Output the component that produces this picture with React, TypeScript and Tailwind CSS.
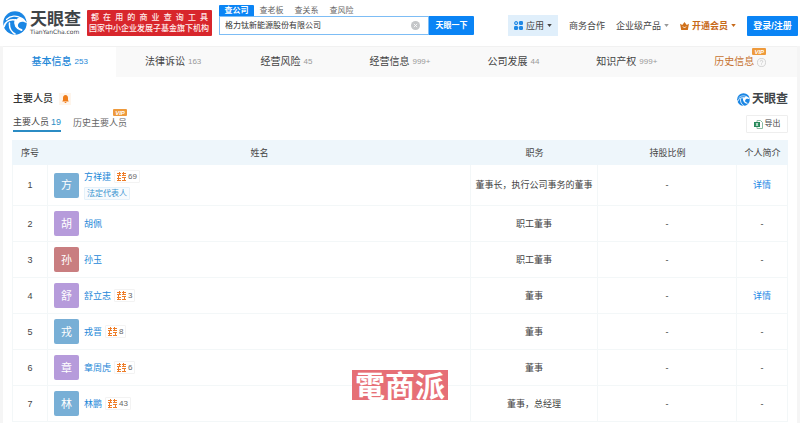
import type { ReactNode } from "react";

type Person = {
  name: string;
  avatar: string;
  color: string;
  companies?: number;
  legal?: boolean;
  job: string;
  detail?: boolean;
};

const people: Person[] = [
  { name: "方祥建", avatar: "方", color: "bg-[#78afd6]", companies: 69, legal: true, job: "董事长，执行公司事务的董事", detail: true },
  { name: "胡佩", avatar: "胡", color: "bg-[#b69bdb]", job: "职工董事" },
  { name: "孙玉", avatar: "孙", color: "bg-[#c97e80]", job: "职工董事" },
  { name: "舒立志", avatar: "舒", color: "bg-[#b69bdb]", companies: 3, job: "董事", detail: true },
  { name: "戎晋", avatar: "戎", color: "bg-[#78afd6]", companies: 8, job: "董事" },
  { name: "章周虎", avatar: "章", color: "bg-[#b69bdb]", companies: 6, job: "董事" },
  { name: "林鹏", avatar: "林", color: "bg-[#78afd6]", companies: 43, job: "董事，总经理" },
];

const sections = [
  { label: "法律诉讼", count: "163" },
  { label: "经营风险", count: "45" },
  { label: "经营信息", count: "999+" },
  { label: "公司发展", count: "44" },
  { label: "知识产权", count: "999+" },
];

function LogoMark({ className }: { className: string }) {
  return (
    <svg viewBox="0 0 48 48" className={className} aria-hidden="true">
      <circle cx="24" cy="24" r="23.5" fill="#1a86e4" />
      <g fill="none" stroke="#fff" strokeLinecap="round">
        <path d="M7 17C15 9 27 8 36 14" strokeWidth="2.5" />
        <path d="M2 31C5 21 14 16 25 18" strokeWidth="3.5" />
        <path d="M13 24c-1 9 3 17 11 22" strokeWidth="3" />
        <path d="M25 18c-3 9 2 17 12 20" strokeWidth="4" />
      </g>
      <path d="M25 19c4-6 11-8 17-3l7 9c-6-4-12-5-16-2-4 3-4 8-1 12-6-3-9-9-7-16z" fill="#fff" />
      <path d="M37 4l11 12v6C46 15 43 9 37 4z" fill="#fff" />
    </svg>
  );
}

function Caret() {
  return (
    <svg viewBox="0 0 6 4" className="h-[3px] w-[5px]" aria-hidden="true">
      <path d="M0 0h6L3 4z" fill="currentColor" />
    </svg>
  );
}

function Vip() {
  return (
    <span className="absolute -top-2 right-0 flex h-[7px] w-[14px] items-center justify-center rounded-[1px] bg-[#ee9a3c] font-['Liberation_Sans',sans-serif] text-[6px] leading-none font-bold text-white italic">
      VIP
    </span>
  );
}

function CompanyBadge({ count }: { count: number }) {
  return (
    <a href="#companies" className="flex h-[13px] items-center gap-[2px] rounded-[1px] border border-[#f3f3f3] bg-white px-[2px] text-[8px] leading-none text-[#666]">
      <svg viewBox="0 0 9 9" className="h-[9px] w-[9px]" fill="none" stroke="#ee7d28" strokeWidth="1" aria-hidden="true">
        <path d="M0 1.500h4M2.500 0v4M0 3.500h4M5 1.500h4M6.500 0v4M5 3.500h4M1.500 4v5M0 6.500h4M0 8.500h4M5 5.500h4M7.500 5v4M5 8.500h4" />
      </svg>
      {count}
    </a>
  );
}

function Th({ children }: { children: ReactNode }) {
  return <th scope="col" className="h-[25px] bg-[#eef6fb] p-0 text-center font-normal text-[#444]">{children}</th>;
}

const cell = "border-r border-b border-[#f3f7f8] p-0 text-center";

export default function App() {
  return (
    <div className="flex min-h-screen flex-col bg-white font-['Liberation_Sans','Noto_Sans_CJK_SC',sans-serif] text-[9px] leading-3 text-[#444]">
      <header className="flex h-[46px] shrink-0 items-center pr-[2px] pl-[3px]">
        <a href="#home" className="flex items-center gap-[3px]" aria-label="天眼查">
          <LogoMark className="h-6 w-6" />
          <span className="flex w-[54px] flex-col text-[#3f4448]">
            <span className="text-[17px] leading-[17px] font-bold">天眼查</span>
            <span className="font-['DejaVu_Sans',sans-serif] text-[6px] leading-[7px]">TianYanCha.com</span>
          </span>
        </a>
        <div className="ml-[3px] flex h-[26px] w-[125px] shrink-0 flex-col justify-center rounded-[1px] bg-[#d8262c] px-[2px] text-[8px] leading-[11px] font-medium text-[#ffeceb]">
          <div className="flex justify-between px-[2px]">
            {Array.from("都在用的商业查询工具").map((c) => (
              <span key={c}>{c}</span>
            ))}
          </div>
          <div className="whitespace-nowrap">国家中小企业发展子基金旗下机构</div>
        </div>

        <form className="mb-[6px] ml-[7px] flex w-[255px] shrink-0 flex-col" onSubmit={(e) => e.preventDefault()}>
          <div className="flex h-[11px] text-[8px] leading-[11px] text-[#666]">
            <button type="button" className="w-[35px] rounded-t-[1px] bg-[#0a84f5] font-bold text-white">查公司</button>
            <button type="button" className="w-[35px]">查老板</button>
            <button type="button" className="w-[35px]">查关系</button>
            <button type="button" className="w-[35px]">查风险</button>
          </div>
          <div className="flex h-[19px]">
            <div className="flex flex-1 items-center border border-[#7dbdf5] pr-2 pl-[5px]">
              <input aria-label="公司名称" defaultValue="格力钛新能源股份有限公司" className="min-w-0 flex-1 text-[8px] leading-3 text-[#333] outline-none" />
              <button type="button" aria-label="清除">
                <svg viewBox="0 0 10 10" className="h-[9px] w-[9px]">
                  <circle cx="5" cy="5" r="5" fill="#c4c6c8" />
                  <path d="M3.2 3.2l3.6 3.6M6.8 3.2L3.2 6.8" stroke="#fff" strokeWidth="0.9" />
                </svg>
              </button>
            </div>
            <button type="submit" className="w-[45px] rounded-r-[1px] bg-[#0a84f5] text-[8px] font-bold text-white">天眼一下</button>
          </div>
        </form>

        <nav className="mt-[5px] ml-auto flex items-center whitespace-nowrap">
          <button className="flex h-[21px] items-center gap-[3px] bg-[#e0effb] px-[6px]">
            <svg viewBox="0 0 20 20" className="h-[9px] w-[9px]" fill="#1e88e5" aria-hidden="true">
              <circle cx="4.7" cy="4.7" r="3.2" fill="none" stroke="#1e88e5" strokeWidth="2.6" />
              <rect x="11" y="0" width="9" height="9" rx="3" />
              <rect x="0" y="11" width="9" height="9" rx="3" />
              <rect x="11" y="11" width="9" height="9" rx="3" />
            </svg>
            应用
            <Caret />
          </button>
          <a href="#business" className="ml-[11px]">商务合作</a>
          <button className="ml-[11px] flex items-center gap-[3px]">
            企业级产品
            <span className="text-[#999]"><Caret /></span>
          </button>
          <button className="ml-[11px] flex items-center gap-[3px] font-bold text-[#c76a1a]">
            <svg viewBox="0 0 20 18" className="h-2 w-[9px]" aria-hidden="true">
              <path d="M0 4l5 3 5-7 5 7 5-3-2.5 14h-15z" fill="#d0701a" />
              <path d="M6.5 10l3.5 3.5 3.5-3.5" fill="none" stroke="#fff" strokeWidth="2" />
            </svg>
            开通会员
            <Caret />
          </button>
          <button className="ml-[11px] h-5 w-[51px] rounded-[1px] bg-[#0a84f5] font-bold text-white">登录/注册</button>
        </nav>
      </header>

      <div className="flex flex-1 flex-col bg-[#f5f5f5] px-[3px]">
        <nav className="grid h-[31px] grid-cols-7 border-t border-[#f1f1f1] bg-[#f9f9f9] text-[10px]">
          <a href="#basic" className="flex items-center justify-center gap-[3px] bg-white font-medium text-[#1e88d8]">
            基本信息<span className="text-[8px]">253</span>
          </a>
          {sections.map((s) => (
            <a key={s.label} href="#section" className="flex items-center justify-center gap-[3px]">
              {s.label}
              <span className="text-[8px] text-[#999]">{s.count}</span>
            </a>
          ))}
          <a href="#history" className="flex items-center justify-center text-[#c77432]">
            <span className="relative flex items-center gap-[3px]">
              历史信息
              <svg viewBox="0 0 10 10" className="h-[9px] w-[9px]" fill="none" stroke="#c4c4c4" strokeWidth="0.8" aria-hidden="true">
                <circle cx="5" cy="5" r="4.5" />
                <path d="M3.6 4a1.4 1.4 0 1 1 2 1.200q-.6.3-.6 1M5 7.100v.8" />
              </svg>
              <Vip />
            </span>
          </a>
        </nav>

        <main className="relative flex-1 bg-white pr-[9px] pl-[9px]">
          <div className="flex h-[34px] items-center pt-[10px] pl-px">
            <h1 className="text-[10px] font-medium text-[#333]">主要人员</h1>
            <button aria-label="订阅" className="ml-[6px] flex h-3 w-3 items-center justify-center bg-[#fef5ec]">
              <svg viewBox="0 0 14 16" className="h-2 w-[7px]" fill="#ef7d1a" aria-hidden="true">
                <path d="M7 0C3.500 0 2 2.700 2 6v4L.5 13h13L12 10V6c0-3.300-1.500-6-5-6zM5 14h4a2 2 0 0 1-4 0z" />
              </svg>
            </button>
            <span className="ml-auto flex items-center gap-[2px] text-[12px] font-bold text-[#3f4448]">
              <LogoMark className="h-[13px] w-[13px]" />
              天眼查
            </span>
          </div>

          <div className="flex h-[29px] items-start pl-px">
            <button className="flex h-[21px] items-center gap-[2px] border-b-2 border-[#2b8cc4] pt-[2px]">
              主要人员<span className="text-[#2b8cc4]">19</span>
            </button>
            <button className="relative mt-[6px] ml-3 text-[#666]">
              历史主要人员
              <Vip />
            </button>
            <button className="mt-1 ml-auto flex h-[18px] w-[42px] items-center justify-center gap-[2px] rounded-[1px] border border-[#eee] text-[8px]">
              <svg viewBox="0 0 9 9" className="h-[9px] w-[9px]" aria-hidden="true">
                <path d="M3 .5h3.500l2 2v6H3z" fill="#fff" stroke="#8bbda2" />
                <path d="M0 2h6v5H0z" fill="#27895a" />
                <path d="M2 3l2 3M4 3l-2 3" stroke="#fff" strokeWidth="0.800" />
              </svg>
              导出
            </button>
          </div>

          <table className="w-full table-fixed border-separate border-spacing-0">
            <colgroup>
              <col className="w-[36px]" />
              <col />
              <col className="w-[127px]" />
              <col className="w-[139px]" />
              <col className="w-[51px]" />
            </colgroup>
            <thead>
              <tr>
                <Th>序号</Th>
                <Th>姓名</Th>
                <Th>职务</Th>
                <Th>持股比例</Th>
                <Th>个人简介</Th>
              </tr>
            </thead>
            <tbody>
              {people.map((p, i) => (
                <tr key={p.name} className={p.legal ? "h-[41px]" : "h-[36px]"}>
                  <td className={cell + " border-l"}>{i + 1}</td>
                  <td className={cell}>
                    <div className="flex items-center gap-[5px] pl-[6px]">
                      <span className={"flex h-[25px] w-[25px] shrink-0 items-center justify-center rounded-[2px] text-[11px] text-white " + p.color}>
                        {p.avatar}
                      </span>
                      <div className="flex flex-col items-start gap-1">
                        <div className="flex h-[13px] items-center gap-[3px]">
                          <a href="#person" className="text-[#1e88d8]">{p.name}</a>
                          {p.companies && <CompanyBadge count={p.companies} />}
                        </div>
                        {p.legal && (
                          <span className="rounded-[1px] border border-[#e4f1fa] bg-[#f7fbfe] px-[2px] text-[8px] leading-[11px] text-[#3a94d0]">法定代表人</span>
                        )}
                      </div>
                    </div>
                  </td>
                  <td className={cell + " whitespace-nowrap"}>{p.job}</td>
                  <td className={cell}>-</td>
                  <td className={cell}>
                    {p.detail ? <a href="#detail" className="text-[#1e88e5]">详情</a> : "-"}
                  </td>
                </tr>
              ))}
            </tbody>
          </table>

          <div className="absolute bottom-[23px] left-1/2 flex h-[30px] w-24 -translate-x-1/2 items-center justify-center bg-[#e66f76] pb-[2px] font-['Noto_Sans_CJK_TC',sans-serif] text-[30px] leading-[30px] font-bold text-white">
            電商派
          </div>
        </main>
      </div>
    </div>
  );
}
